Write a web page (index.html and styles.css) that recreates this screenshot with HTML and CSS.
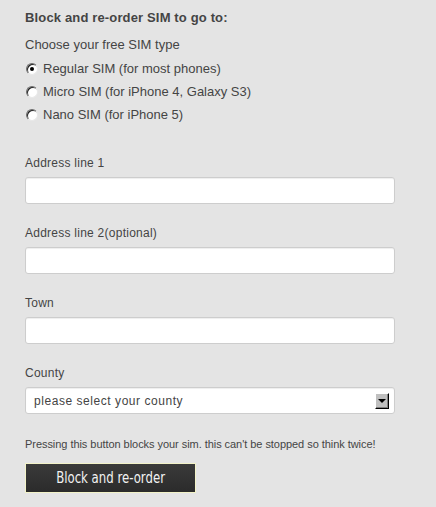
FILE: index.html
```html
<!DOCTYPE html>
<html lang="en">
<head>
<meta charset="utf-8">
<title>Block and re-order SIM</title>
<link rel="stylesheet" href="styles.css">
</head>
<body>
<form class="form">
  <h2 class="title">Block and re-order SIM to go to:</h2>
  <p class="subtitle">Choose your free SIM type</p>
  <div class="radios">
    <label class="radio"><span class="dot checked"></span>Regular SIM (for most phones)</label>
    <label class="radio"><span class="dot"></span>Micro SIM (for iPhone 4, Galaxy S3)</label>
    <label class="radio"><span class="dot"></span>Nano SIM (for iPhone 5)</label>
  </div>
  <div class="fields">
    <div class="field">
      <label class="label">Address line 1</label>
      <div class="input"></div>
    </div>
    <div class="field">
      <label class="label">Address line 2(optional)</label>
      <div class="input"></div>
    </div>
    <div class="field">
      <label class="label">Town</label>
      <div class="input"></div>
    </div>
    <div class="field">
      <label class="label">County</label>
      <div class="input select">
        <span class="select-text">please select your county</span>
        <span class="arrow-box"><span class="arrow"></span></span>
      </div>
    </div>
  </div>
  <p class="note">Pressing this button blocks your sim. this can't be stopped so think twice!</p>
  <div class="button"><span class="button-text">Block and re-order</span></div>
</form>
</body>
</html>
```
FILE: styles.css
```css
html, body {
  margin: 0;
  padding: 0;
  background: #e4e4e4;
}
body {
  font-family: "Liberation Sans", Arial, sans-serif;
  color: #444;
}
.form {
  display: flex;
  flex-direction: column;
  padding: 10px 0 0 25px;
  width: 370px;
}
.title {
  margin: 0;
  font-size: 13px;
  line-height: 16px;
  font-weight: bold;
  letter-spacing: 0.15px;
  color: #444;
}
.subtitle {
  margin: 11px 0 0;
  font-size: 13px;
  line-height: 16px;
  color: #444;
}
.radios {
  display: flex;
  flex-direction: column;
  margin-top: 4px;
}
.radio {
  display: flex;
  align-items: center;
  height: 23px;
  font-size: 13px;
  color: #444;
}
.dot {
  box-sizing: border-box;
  width: 12px;
  height: 12px;
  margin: 0 5px 0 1px;
  border-radius: 50%;
  background: #fff;
  border: 1px solid #6a6a6a;
  border-bottom-color: #e8e8e8;
  border-right-color: #e8e8e8;
  box-shadow: inset 1px 1px 0 #222;
  position: relative;
}
.dot.checked::after {
  content: "";
  position: absolute;
  left: 3px;
  top: 3px;
  width: 4px;
  height: 4px;
  border-radius: 50%;
  background: #000;
}
.fields {
  display: flex;
  flex-direction: column;
  gap: 22px;
  margin-top: 30px;
}
.field {
  display: flex;
  flex-direction: column;
  gap: 6px;
}
.label {
  font-size: 12px;
  line-height: 15px;
  letter-spacing: 0.25px;
  color: #444;
}
.input {
  box-sizing: border-box;
  height: 27px;
  background: #fff;
  border: 1px solid #cdcdcd;
  border-radius: 3px;
  box-shadow: inset 0 1px 1px #eee;
}
.select {
  display: flex;
  align-items: center;
  justify-content: space-between;
  padding: 0 5px 0 8px;
}
.select-text {
  font-size: 12px;
  letter-spacing: 0.55px;
  color: #444;
}
.arrow-box {
  box-sizing: border-box;
  width: 14px;
  height: 16px;
  background: #c0c0c0;
  border: 1px solid;
  border-color: #fff #000 #000 #fff;
  box-shadow: inset -1px -1px 0 #808080;
  display: flex;
  align-items: center;
  justify-content: center;
}
.arrow {
  width: 0;
  height: 0;
  border-left: 4px solid transparent;
  border-right: 4px solid transparent;
  border-top: 4px solid #000;
  margin-top: 1px;
}
.note {
  margin: 23px 0 0;
  font-size: 11px;
  line-height: 14px;
  letter-spacing: -0.05px;
  color: #444;
}
.button {
  box-sizing: border-box;
  width: 171px;
  height: 30px;
  margin-top: 12px;
  border: 1px solid #f2f2c8;
  background: linear-gradient(#3a3a3a, #2b2b2b);
  color: #f2f2f2;
  display: flex;
  align-items: center;
  justify-content: center;
}
.button-text {
  font-family: "DejaVu Sans Condensed", "DejaVu Sans", sans-serif;
  font-size: 15px;
  transform: scaleX(0.87);
  white-space: nowrap;
}
```
